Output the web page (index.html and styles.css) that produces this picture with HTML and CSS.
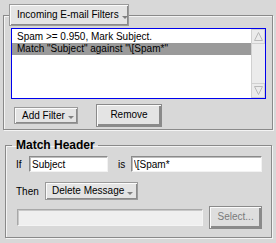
FILE: index.html
```html
<!DOCTYPE html>
<html>
<head>
<meta charset="utf-8">
<link rel="stylesheet" href="styles.css">
</head>
<body>
<fieldset class="group filters">
  <legend class="legend-btn"><button class="btn menu-btn top-menu">Incoming E-mail Filters<span class="caret"></span></button></legend>
  <div class="listbox">
    <div class="rows">
      <div class="row">Spam &gt;= 0.950, Mark Subject.</div>
      <div class="row selected">Match "Subject" against "\[Spam*"</div>
    </div>
    <div class="scrollbar">
      <div class="arrow up"><svg width="11" height="11" viewBox="0 0 11 11"><path d="M5.5 1.5 L9.5 9.5 L1.5 9.5 Z" fill="none" stroke="#b8b8b8" stroke-width="1"/></svg></div>
      <div class="track"></div>
      <div class="arrow down"><svg width="11" height="11" viewBox="0 0 11 11"><path d="M1.5 1.5 L9.5 1.5 L5.5 9.5 Z" fill="none" stroke="#b8b8b8" stroke-width="1"/></svg></div>
    </div>
  </div>
  <div class="actions">
    <button class="btn menu-btn add">Add Filter<span class="caret"></span></button>
    <button class="btn big remove">Remove</button>
  </div>
</fieldset>
<fieldset class="group match">
  <legend class="title">Match Header</legend>
  <div class="line">
    <span class="lbl if">If</span>
    <input class="field subject" value="Subject">
    <span class="lbl is">is</span>
    <input class="field pattern" value="\[Spam*">
  </div>
  <div class="line then-line">
    <span class="lbl then">Then</span>
    <button class="btn menu-btn action">Delete Message<span class="caret"></span></button>
  </div>
  <div class="line last">
    <input class="field disabled-field" disabled>
    <button class="btn big select" disabled>Select...</button>
  </div>
</fieldset>
</body>
</html>
```
FILE: styles.css
```css
* { box-sizing: border-box; }
html, body { margin: 0; padding: 0; }
body {
  background: #d8d8d8;
  font-family: "Liberation Sans", Arial, sans-serif;
  font-size: 10px;
  color: #000;
  width: 276px;
  height: 243px;
  overflow: hidden;
}
.group {
  border: 1px solid #8a8a8a;
  box-shadow: inset 1px 1px 0 #f4f4f4, 1px 1px 0 #f4f4f4;
  margin: 0;
  min-width: 0;
}
.filters {
  margin: 4px 3px 0 3px;
  padding: 2px 6px 3px 7px;
  height: 126px;
}
.legend-btn {
  padding: 0;
  margin-left: -2px;
  line-height: 0;
}
.btn {
  font-family: "Liberation Sans", Arial, sans-serif;
  font-size: 10px;
  color: #000;
  background: #e4e4e4;
  border: 1px solid #9a9a9a;
  box-shadow: inset 1px 1px 0 #fbfbfb, inset -1px -1px 0 #8a8a8a;
  padding: 0 4px 0 7px;
  margin: 0;
  height: 18px;
  line-height: 12px;
  display: inline-flex;
  align-items: center;
  border-radius: 0;
  white-space: nowrap;
}
.top-menu { height: 22px; width: 120px; }
.caret {
  display: inline-block;
  width: 0; height: 0;
  border-left: 3px solid transparent;
  border-right: 3px solid transparent;
  border-top: 3px solid #808080;
  margin-left: 3px;
  margin-top: 4px;
}
.listbox {
  height: 71px;
  border: 1px solid #0000ee;
  background: #fff;
  display: flex;
}
.rows { flex: 1; padding-top: 2px; min-width: 0; }
.row {
  height: 12px;
  line-height: 12px;
  padding-left: 5px;
  white-space: nowrap;
  overflow: hidden;
}
.row.selected { background: #9a9a9a; }
.scrollbar {
  width: 14px;
  background: #ebebeb;
  display: flex;
  flex-direction: column;
  border-left: 1px solid #d0d0d0;
}
.arrow {
  height: 15px;
  display: flex;
  align-items: center;
  justify-content: center;
  background: #ebebeb;
  border: 1px solid #d0d0d0;
  border-left: 0;
}
.track { flex: 1; }
.actions {
  display: flex;
  align-items: center;
  margin-top: 5px;
  padding-left: 3px;
}
.add { width: 64px; height: 17px; }
.big {
  height: 23px;
  justify-content: center;
  border: 1px solid #8a8a8a;
  box-shadow: inset 1px 1px 0 #fbfbfb, inset -2px -2px 0 #8a8a8a;
  padding: 0 0 1px 0;
}
.remove { width: 66px; margin-left: 18px; }
.match {
  margin: 8px 4px 0 5px;
  padding: 4px 9px 8px 10px;
}
.title {
  font-weight: bold;
  font-size: 12px;
  padding: 0 3px 0 4px;
  margin-left: -4px;
  line-height: 14px;
}
.line { display: flex; align-items: center; }
.then-line { margin-top: 10px; }
.line.last { margin-top: 6px; margin-left: 1px; }
.lbl { white-space: nowrap; }
.if { width: 14px; }
.is { width: 14px; margin-left: 10px; }
.then { width: 29px; }
.field {
  font-family: "Liberation Sans", Arial, sans-serif;
  font-size: 10px;
  height: 16px;
  border: 1px solid;
  border-color: #8a8a8a #f2f2f2 #f2f2f2 #8a8a8a;
  box-shadow: inset 1px 1px 0 #bdbdbd;
  background: #fff;
  padding: 0 2px;
  margin: 0;
  outline: none;
  color: #000;
}
.subject { width: 79px; }
.pattern { width: 131px; }
.action { width: 93px; height: 18px; padding-left: 6px; }
.disabled-field {
  width: 187px;
  height: 17px;
  background: #efefef;
  border-color: #a8a8a8 #f4f4f4 #f4f4f4 #a8a8a8;
  box-shadow: inset 1px 1px 0 #c8c8c8;
}
.select {
  width: 53px;
  margin-left: 6px;
  color: #7a7a7a;
  background: #dedede;
}
```
